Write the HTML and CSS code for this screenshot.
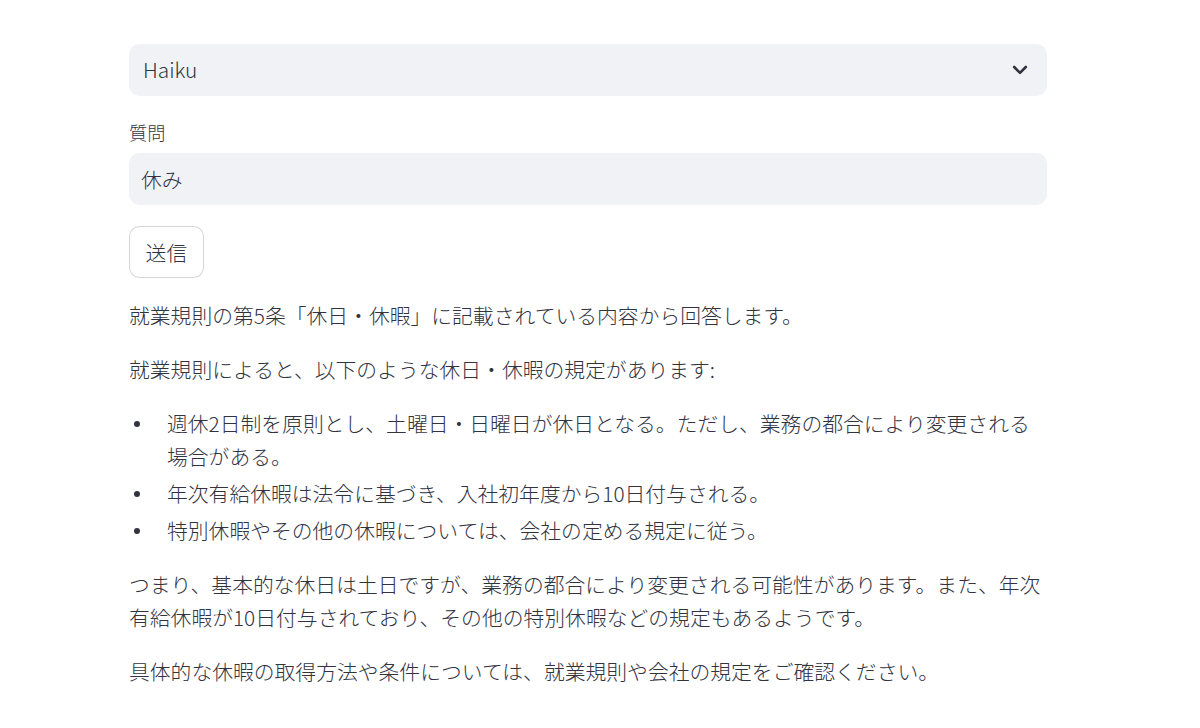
FILE: index.html
```html
<!DOCTYPE html>
<html lang="ja">
<head>
    <meta charset="UTF-8">
    <meta name="viewport" content="width=device-width, initial-scale=1.0">
    <title>就業規則 Q&amp;A</title>
    <link rel="stylesheet" href="styles.css">
</head>
<body>
    <div class="main">
        <!-- Model select -->
        <div class="select-box">
            <span class="select-value">Haiku</span>
            <svg class="chevron" width="16" height="16" viewBox="0 0 16 16">
                <path d="M2.2 5 L8 10.8 L13.8 5" fill="none" stroke="#31333f" stroke-width="2.6" stroke-linecap="round" stroke-linejoin="round"/>
            </svg>
        </div>

        <!-- Question input -->
        <div class="field">
            <label for="question" class="field-label">質問</label>
            <input type="text" id="question" class="text-input" value="休み">
        </div>

        <div>
            <button class="send-btn">送信</button>
        </div>

        <!-- Answer -->
        <div class="answer">
            <p>就業規則の第5条「休日・休暇」に記載されている内容から回答します。</p>
            <p>就業規則によると、以下のような休日・休暇の規定があります:</p>
            <ul>
                <li>週休2日制を原則とし、土曜日・日曜日が休日となる。ただし、業務の都合により変更される場合がある。</li>
                <li>年次有給休暇は法令に基づき、入社初年度から10日付与される。</li>
                <li>特別休暇やその他の休暇については、会社の定める規定に従う。</li>
            </ul>
            <p>つまり、基本的な休日は土日ですが、業務の都合により変更される可能性があります。また、年次有給休暇が10日付与されており、その他の特別休暇などの規定もあるようです。</p>
            <p>具体的な休暇の取得方法や条件については、就業規則や会社の規定をご確認ください。</p>
        </div>
    </div>
</body>
</html>
```

FILE: styles.css
```css
body {
    margin: 0;
    padding: 0;
    background-color: #fff;
    color: #31333f;
    font-family: "Noto Sans CJK JP", "Noto Sans", sans-serif;
    font-weight: 300;
    font-size: 20.8px;
    line-height: 1.6;
}
.main {
    width: 918px;
    margin-left: 129px;
    padding-top: 44px;
    display: flex;
    flex-direction: column;
    gap: 20.8px;
}
.select-box {
    height: 52px;
    background-color: #f0f2f6;
    border-radius: 10.4px;
    display: flex;
    align-items: center;
    justify-content: space-between;
    padding: 0 19px 0 14px;
    box-sizing: border-box;
}
.select-value {
    font-size: 20.8px;
}
.chevron {
    display: block;
}
.field {
    display: flex;
    flex-direction: column;
}
.field-label {
    font-size: 18.2px;
    min-height: 31.2px;
    line-height: 31.2px;
    margin-bottom: 5.2px;
}
.text-input {
    height: 52px;
    box-sizing: border-box;
    border: none;
    border-radius: 10.4px;
    background-color: #f0f2f6;
    padding: 0 12px;
    font-family: inherit;
    font-weight: inherit;
    font-size: 20.8px;
    color: #31333f;
    outline: none;
}
.send-btn {
    height: 52px;
    padding: 0 15.6px;
    background-color: #fff;
    border: 1.3px solid rgba(49, 51, 63, 0.2);
    border-radius: 10.4px;
    font-family: inherit;
    font-weight: inherit;
    font-size: 20.8px;
    color: #31333f;
    cursor: pointer;
}
.answer p {
    margin: 0 0 20.8px 0;
}
.answer p:last-child {
    margin-bottom: 0;
}
.answer ul {
    margin: 0 0 20.8px 0;
    padding: 0;
    list-style: none;
}
.answer li {
    display: flex;
    margin: 0 0 3.5px 0;
}
.answer li::before {
    content: "";
    flex: 0 0 6px;
    width: 6px;
    height: 6px;
    margin: 14px 27px 0 5px;
    border-radius: 50%;
    background-color: #31333f;
}
```
